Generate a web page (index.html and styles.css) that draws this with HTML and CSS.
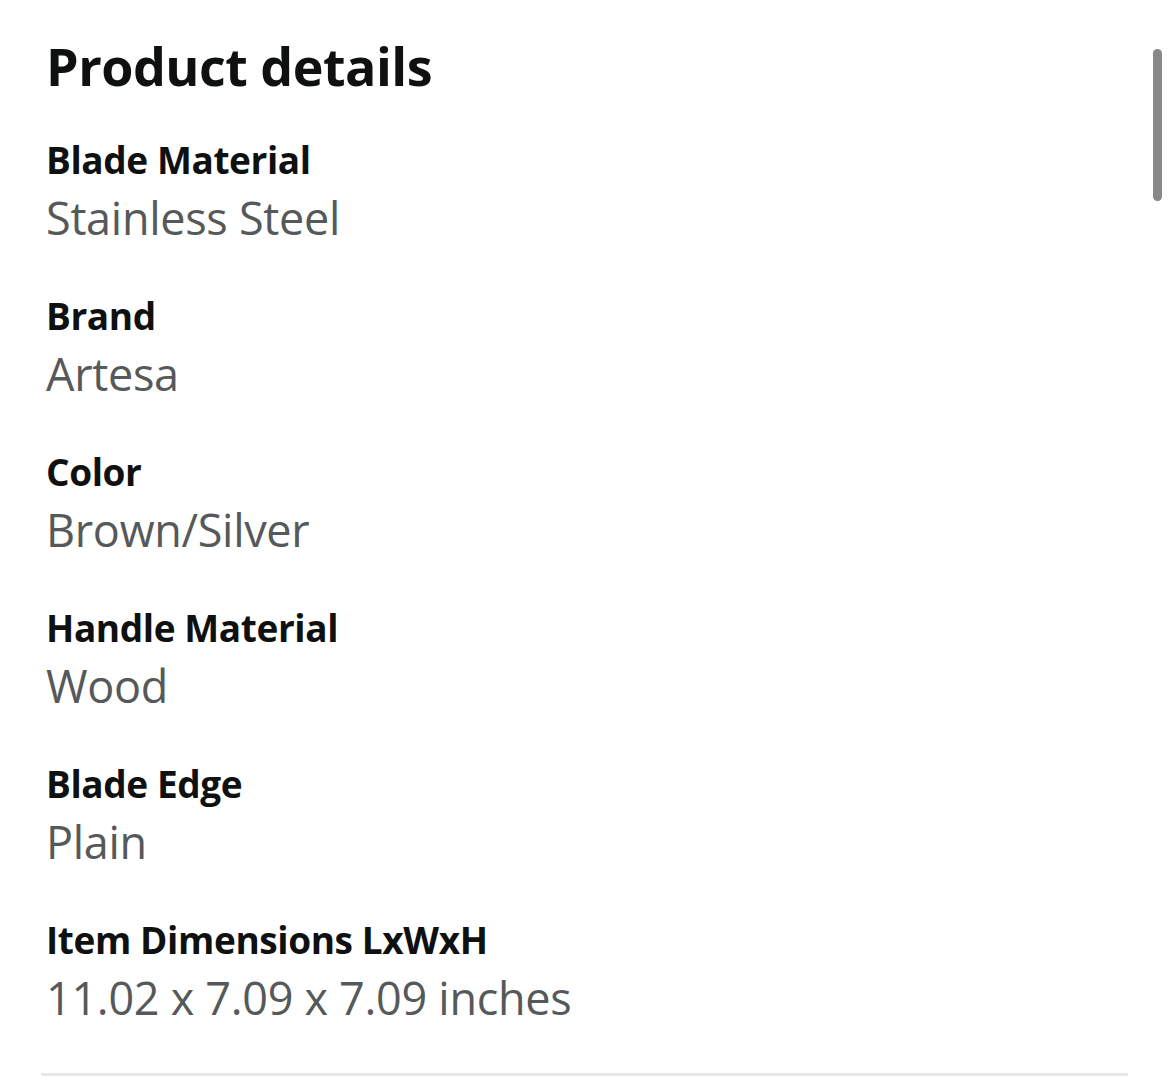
FILE: index.html
```html
<!DOCTYPE html>
<html>
<head>
<meta charset="utf-8">
<link rel="stylesheet" href="styles.css">
</head>
<body>
<div class="page">
  <h1 class="title">Product details</h1>
  <div class="list">
    <div class="row"><div class="label">Blade Material</div><div class="value">Stainless Steel</div></div>
    <div class="row"><div class="label">Brand</div><div class="value">Artesa</div></div>
    <div class="row"><div class="label">Color</div><div class="value">Brown/Silver</div></div>
    <div class="row"><div class="label">Handle Material</div><div class="value">Wood</div></div>
    <div class="row"><div class="label">Blade Edge</div><div class="value">Plain</div></div>
    <div class="row"><div class="label">Item Dimensions LxWxH</div><div class="value">11.02 x 7.09 x 7.09 inches</div></div>
  </div>
  <div class="divider"></div>
</div>
<div class="scrollbar"></div>
</body>
</html>
```
FILE: styles.css
```css
html, body { margin: 0; padding: 0; background: #fff; }
body { font-family: "Open Sans", "Noto Sans", sans-serif; width: 1170px; height: 1084px; overflow: hidden; position: relative; }
.page { padding: 30px 42px 0 46px; }
.title { margin: 0; font-size: 52px; font-weight: 700; color: #0f1111; line-height: 72px; letter-spacing: -0.5px; }
.list { display: flex; flex-direction: column; gap: 40px; margin-top: 31px; }
.row { display: flex; flex-direction: column; }
.label { font-size: 37px; font-weight: 700; color: #0f1111; line-height: 54px; letter-spacing: -0.4px; }
.value { font-size: 45px; color: #565959; line-height: 62px; letter-spacing: -0.3px; }
.divider { height: 3px; background: #e7e7e7; margin: 44px 0 0 -5px; }
.scrollbar { position: absolute; right: 8px; top: 49px; width: 9px; height: 152px; border-radius: 5px; background: #888; }
```
